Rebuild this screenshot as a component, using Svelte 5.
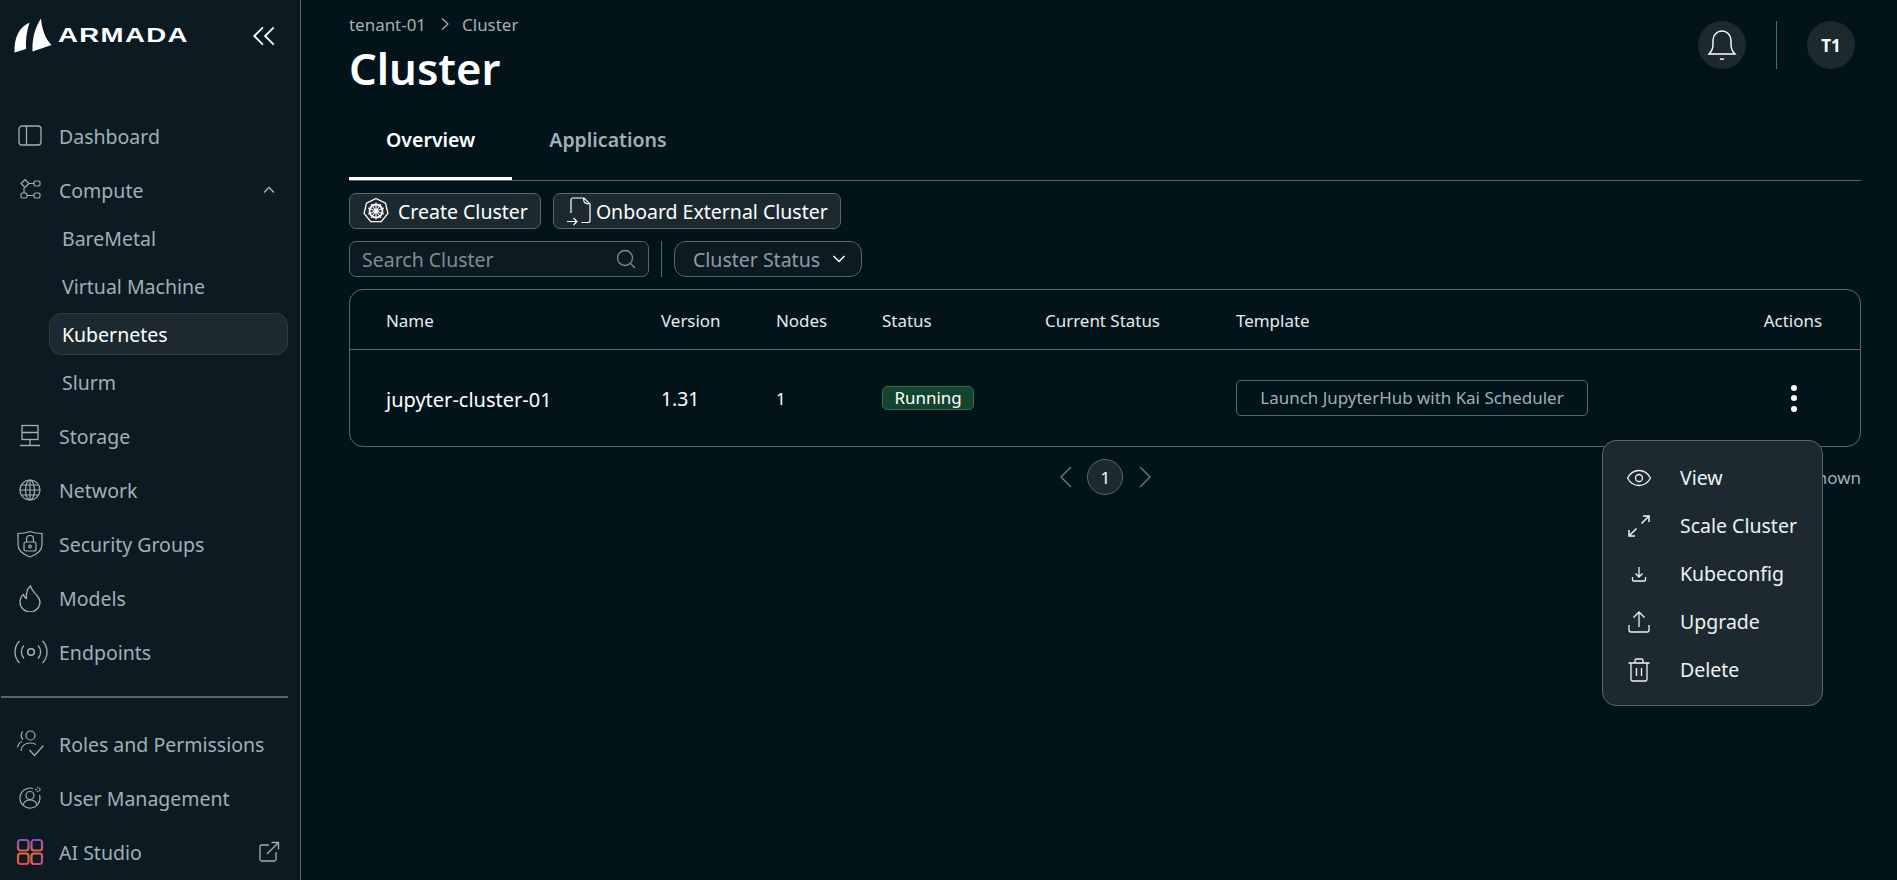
<script>
  const columns = ['Name', 'Version', 'Nodes', 'Status', 'Current Status', 'Template', 'Actions'];
  const children = ['BareMetal', 'Virtual Machine', 'Kubernetes', 'Slurm'];
</script>

<div class="page">
  <aside class="sidebar">
    <div class="brand">
      <div class="logo">
        <svg class="sail" viewBox="0 0 40 36" width="40" height="36">
          <path d="M0.5 34.5C0 18 6 9 15.500 4.500C12.500 14 11.500 23 12 31Z" fill="#fff" />
          <path d="M27 0.500C28 12 31.500 21 37.500 27L18.500 33.500C18 20 21 10 27 0.500Z" fill="#fff" />
        </svg>
        <span class="wordmark">ARMADA</span>
      </div>
      <svg class="collapse" viewBox="0 0 24 24" width="26" height="26" fill="none" stroke="#fff" stroke-width="1.700">
        <path d="M11 4L3 12l8 8M21 4l-8 8 8 8" />
      </svg>
    </div>

    <nav class="nav">
      <div class="item">
        <svg class="ic" viewBox="0 0 28 28" fill="none" stroke="currentColor" stroke-width="1.300">
          <rect x="3" y="4" width="22" height="19" rx="3" /><path d="M10.500 4v19" />
        </svg>
        Dashboard
      </div>
      <div class="item">
        <svg class="ic" viewBox="0 0 28 28" fill="none" stroke="currentColor" stroke-width="1.200">
          <path d="M9 3.500l4 4-4 4-4-4z" /><rect x="18" y="5" width="6" height="5" rx="1.500" /><rect x="5" y="17" width="6" height="5" rx="1.500" /><rect x="18" y="17" width="6" height="5" rx="1.500" />
          <path d="M13 7.500h5M11 19.500h7M8 11.500V17" />
        </svg>
        Compute
        <svg class="caret" viewBox="0 0 14 14" width="14" height="14" fill="none" stroke="currentColor" stroke-width="1.500"><path d="M2 9.500l5-5 5 5" /></svg>
      </div>
      <div class="sub">
        {#each children as child}
          <div class="sub-item" class:active={child === 'Kubernetes'}>{child}</div>
        {/each}
      </div>
      <div class="item">
        <svg class="ic" viewBox="0 0 28 28" fill="none" stroke="currentColor" stroke-width="1.300">
          <rect x="6" y="3.500" width="16" height="14" /><path d="M6 10.500h16M14 17.500v6M4 23.500h20" />
        </svg>
        Storage
      </div>
      <div class="item">
        <svg class="ic" viewBox="0 0 28 28" fill="none" stroke="currentColor" stroke-width="1.200">
          <circle cx="14" cy="14" r="10" /><ellipse cx="14" cy="14" rx="4.500" ry="10" /><path d="M4 14h20M5.300 9h17.400M5.300 19h17.400M14 4v20" />
        </svg>
        Network
      </div>
      <div class="item">
        <svg class="ic" viewBox="0 0 28 28" fill="none" stroke="currentColor" stroke-width="1.200">
          <path d="M14 1.500c4 1.500 8 2 12 2v11c0 6-5 10-12 12.500C7 24.500 2 20.500 2 14.500v-11c4 0 8-.5 12-2z" />
          <rect x="8" y="12" width="12" height="9" rx="2" /><path d="M10.500 12V9a3.500 3.500 0 017 0v3" /><circle cx="14" cy="16.500" r="1.300" />
        </svg>
        Security Groups
      </div>
      <div class="item">
        <svg class="ic" viewBox="0 0 28 28" fill="none" stroke="currentColor" stroke-width="1.300">
          <path d="M14.500 2c1 4 4 6.500 6.500 9.500 2 2.500 3 4.500 3 6.500a10 10 0 01-20 0c0-3 1.500-6 3.500-7.500.5 2 1.500 3.500 3 4C10 10 11 5 14.500 2z" />
        </svg>
        Models
      </div>
      <div class="item">
        <svg class="ic wide" viewBox="0 0 34 28" fill="none" stroke="currentColor" stroke-width="1.300">
          <circle cx="17" cy="14" r="3.300" stroke-width="1.600" />
          <path d="M10 7.500c-3.500 3.500-3.500 9.500 0 13M24 7.500c3.500 3.500 3.500 9.500 0 13M5.500 3c-6 6-6 16 0 22M28.500 3c6 6 6 16 0 22" />
        </svg>
        Endpoints
      </div>

      <div class="rule"></div>

      <div class="item">
        <svg class="ic" viewBox="0 0 28 28" fill="none" stroke="currentColor" stroke-width="1.200">
          <circle cx="14.500" cy="5.500" r="4.500" /><path d="M7 1.500c-2.500 1.500-2.500 6 0 8M1.500 17.500c.5-3 2-5 4.500-6M5 21c.5-5 4-8 9.500-8 2 0 4 .5 5.500 1.500M13.500 20l5 5.500 9-10" />
        </svg>
        Roles and Permissions
      </div>
      <div class="item">
        <svg class="ic" viewBox="0 0 28 28" fill="none" stroke="currentColor" stroke-width="1.200">
          <path d="M17 4.500A10 10 0 1023.500 11" /><circle cx="14" cy="11.500" r="4" /><path d="M7 21c1-3.500 3.500-5 7-5s6 1.500 7 5" />
          <circle cx="22" cy="5.500" r="2" stroke-dasharray="1.500 1" />
        </svg>
        User Management
      </div>
      <div class="item">
        <svg class="ic" viewBox="0 0 28 28" fill="none" stroke-width="2.200">
          <defs>
            <linearGradient id="studioTop" gradientUnits="userSpaceOnUse" x1="0" y1="1" x2="0" y2="14">
              <stop offset="0" stop-color="#8d4cc4" /><stop offset="1" stop-color="#e0604a" />
            </linearGradient>
            <linearGradient id="studioLeft" gradientUnits="userSpaceOnUse" x1="0" y1="15" x2="0" y2="27">
              <stop offset="0" stop-color="#f4683a" /><stop offset="1" stop-color="#ea3f4a" />
            </linearGradient>
            <linearGradient id="studioRight" gradientUnits="userSpaceOnUse" x1="15" y1="15" x2="27" y2="27">
              <stop offset="0" stop-color="#f4743a" /><stop offset="1" stop-color="#a944ae" />
            </linearGradient>
          </defs>
          <rect x="2" y="2" width="10.500" height="10.500" rx="2.500" stroke="url(#studioTop)" />
          <rect x="15.500" y="2" width="10.500" height="10.500" rx="2.500" stroke="url(#studioTop)" />
          <rect x="2" y="15.500" width="10.500" height="10.500" rx="2.500" stroke="url(#studioLeft)" />
          <rect x="15.500" y="15.500" width="10.500" height="10.500" rx="2.500" stroke="url(#studioRight)" />
        </svg>
        AI Studio
        <svg class="external" viewBox="0 0 22 22" width="22" height="22" fill="none" stroke="currentColor" stroke-width="1.300">
          <path d="M11 4H3.500A1.500 1.500 0 002 5.500v13A1.500 1.500 0 003.500 20h13a1.500 1.500 0 001.500-1.500V11M9 13L20.500 1.500M13.500 1.500h7v7" />
        </svg>
      </div>
    </nav>
  </aside>

  <main class="main">
    <header class="top">
      <div>
        <div class="crumbs">
          <span>tenant-01</span>
          <svg viewBox="0 0 10 14" width="10" height="14" fill="none" stroke="currentColor" stroke-width="1.200"><path d="M2 1.500L8 7l-6 5.500" /></svg>
          <span class="crumb-last">Cluster</span>
        </div>
        <h1>Cluster</h1>
      </div>
      <div class="top-actions">
        <div class="round">
          <svg viewBox="0 0 32 32" width="32" height="32" fill="none" stroke="#fff" stroke-width="1.400">
            <path d="M3 26c2-2 4-3.500 4-10V12a9 9 0 0118 0v4c0 6.500 2 8 4 10z" transform="translate(0 -1)" /><path d="M14 29.500c1 1 3 1 4 0" />
          </svg>
        </div>
        <div class="vline"></div>
        <div class="round initials">T1</div>
      </div>
    </header>

    <div class="tabs">
      <div class="tab selected">Overview</div>
      <div class="tab">Applications</div>
    </div>

    <div class="buttons">
      <button class="btn">
        <svg viewBox="0 0 28 28" width="28" height="28" fill="none" stroke="#fff" stroke-width="1.300">
          <path d="M14 1.500l9.500 4.600 2.400 10.300-6.600 8.300H8.700l-6.600-8.300 2.400-10.300z" />
          <circle cx="14" cy="14" r="6.500" stroke-width="1.800" /><path d="M14 5.500v17M6 11l16 6M22 11l-16 6M9 21l10-14M19 21L9 7" stroke-width="1.100" /><circle cx="14" cy="14" r="1.800" fill="#fff" />
        </svg>
        Create Cluster
      </button>
      <button class="btn onboard">
        <svg viewBox="0 0 26 30" width="26" height="30" fill="none" stroke="#fff" stroke-width="1.200">
          <path d="M5 17V4a2 2 0 012-2h11l6 6v16.500a2 2 0 01-2 2h-6.500M17.500 2c0 4 1 6 6.500 6" /><path d="M1 25.500h10M7.500 22l3.500 3.500-3.500 3.500" />
        </svg>
        Onboard External Cluster
      </button>
    </div>

    <div class="filters">
      <div class="search">
        <span>Search Cluster</span>
        <svg viewBox="0 0 22 22" width="22" height="22" fill="none" stroke="currentColor" stroke-width="1.300"><circle cx="10" cy="10" r="7.500" /><path d="M15.500 15.500L20 20" /></svg>
      </div>
      <div class="vline short"></div>
      <div class="select">
        Cluster Status
        <svg viewBox="0 0 16 16" width="16" height="16" fill="none" stroke="#fff" stroke-width="1.500"><path d="M2.500 5l5.500 5.500L13.500 5" /></svg>
      </div>
    </div>

    <div class="card">
      <table>
        <thead>
          <tr>
            {#each columns as col}
              <th>{col}</th>
            {/each}
          </tr>
        </thead>
        <tbody>
          <tr>
            <td class="name">jupyter-cluster-01</td>
            <td class="version">1.31</td>
            <td class="nodes">1</td>
            <td><span class="badge">Running</span></td>
            <td></td>
            <td><span class="template">Launch JupyterHub with Kai Scheduler</span></td>
            <td class="kebab"><span class="dots"><i></i><i></i><i></i></span></td>
          </tr>
        </tbody>
      </table>
    </div>

    <div class="pager">
      <div class="pages">
        <svg viewBox="0 0 14 24" width="14" height="24" fill="none" stroke="#6a7a80" stroke-width="1.400"><path d="M12 2L2 12l10 10" /></svg>
        <span class="page-num">1</span>
        <svg viewBox="0 0 14 24" width="14" height="24" fill="none" stroke="#6a7a80" stroke-width="1.400"><path d="M2 2l10 10L2 22" /></svg>
      </div>
      <span class="count">1 of 1 shown</span>
    </div>

    <div class="menu">
      <div class="menu-item">
        <svg viewBox="0 0 26 26" fill="none" stroke="currentColor" stroke-width="1.300">
          <path d="M1.500 13C4.500 7.500 8.500 5.500 13 5.500S21.500 7.500 24.500 13c-3 5.500-7 7.500-11.500 7.500S4.500 18.500 1.500 13z" /><circle cx="13" cy="13" r="3.500" />
        </svg>
        View
      </div>
      <div class="menu-item">
        <svg viewBox="0 0 26 26" fill="none" stroke="currentColor" stroke-width="1.500">
          <path d="M15.500 10.500L23 3M17 3h6v6M10.500 15.500L3 23M3 17v6h6" />
        </svg>
        Scale Cluster
      </div>
      <div class="menu-item">
        <svg viewBox="0 0 26 26" fill="none" stroke="currentColor" stroke-width="1.300">
          <path d="M13 6v10M9.500 12.500L13 16l3.500-3.500M6.500 16v3a1 1 0 001 1h11a1 1 0 001-1v-3" />
        </svg>
        Kubeconfig
      </div>
      <div class="menu-item">
        <svg viewBox="0 0 26 26" fill="none" stroke="currentColor" stroke-width="1.300">
          <path d="M13 18V3M7.500 8.500L13 3l5.500 5.500M3 16v5a2 2 0 002 2h16a2 2 0 002-2v-5" />
        </svg>
        Upgrade
      </div>
      <div class="menu-item">
        <svg viewBox="0 0 26 26" fill="none" stroke="currentColor" stroke-width="1.300">
          <path d="M2.500 6h21M9 6V3.500A1.500 1.500 0 0110.500 2h5A1.500 1.500 0 0117 3.500V6M5 6v16a2 2 0 002 2h12a2 2 0 002-2V6M10.500 11v8M15.500 11v8" />
        </svg>
        Delete
      </div>
    </div>
  </main>
</div>

<style>
  :global(body) {
    margin: 0;
    background: #02131a;
  }

  .page {
    display: flex;
    height: 880px;
    overflow: hidden;
    font-family: 'Noto Sans', sans-serif;
    color: #fff;
  }

  .sidebar {
    width: 300px;
    flex-shrink: 0;
    background: #0c1a21;
    border-right: 1px solid #56676d;
    color: #a2b0b6;
  }

  .brand {
    height: 112px;
    box-sizing: border-box;
    padding: 18px 23px 0 14px;
    display: flex;
    justify-content: space-between;
    align-items: flex-start;
  }

  .logo {
    display: flex;
    gap: 4px;
  }

  .wordmark {
    font-family: 'Liberation Sans', sans-serif;
    font-weight: 700;
    font-size: 20px;
    line-height: 20px;
    margin-top: 7px;
    color: #fff;
    letter-spacing: 1px;
    transform: scaleX(1.38);
    transform-origin: left center;
  }

  .collapse {
    margin-top: 5px;
  }

  .nav {
    display: flex;
    flex-direction: column;
    gap: 6px;
  }

  .item {
    height: 48px;
    display: flex;
    align-items: center;
    padding: 0 25px 0 16px;
    gap: 15px;
    font-size: 19.5px;
    position: relative;
  }

  .ic {
    width: 28px;
    height: 28px;
    flex-shrink: 0;
  }

  .ic.wide {
    width: 34px;
    margin-left: -2px;
    margin-right: -4px;
  }

  .caret {
    margin-left: auto;
    margin-right: -1px;
  }

  .external {
    margin-left: auto;
    margin-right: -5px;
  }

  .sub {
    display: flex;
    flex-direction: column;
    margin-top: -6px;
    margin-bottom: 0;
  }

  .sub-item {
    height: 42px;
    margin: 3px 12px 3px 49px;
    padding-left: 12px;
    display: flex;
    align-items: center;
    font-size: 19.5px;
    border: 1px solid transparent;
    border-radius: 12px;
    box-sizing: border-box;
  }

  .sub-item.active {
    background: #1c2a30;
    border-color: #2d3c42;
    color: #fff;
  }

  .rule {
    height: 2px;
    background: #56676d;
    margin: 14px 12px 16px 1px;
  }

  .main {
    flex: 1;
    min-width: 0;
    padding: 0 36px 0 48px;
    position: relative;
  }

  .top {
    height: 113px;
    display: flex;
    justify-content: space-between;
  }

  .crumbs {
    margin-top: 12px;
    height: 24px;
    display: flex;
    align-items: center;
    gap: 14px;
    font-size: 16.94px;
    color: #a6b1ae;
  }

  .crumb-last {
    margin-left: -2px;
  }

  h1 {
    margin: 6px 0 0;
    font-size: 43.56px;
    line-height: 52px;
    font-weight: 600;
  }

  .top-actions {
    display: flex;
    align-items: center;
    height: 48px;
    margin-top: 21px;
    margin-right: 6px;
  }

  .round {
    width: 48px;
    height: 48px;
    border-radius: 50%;
    background: #1c2a30;
    display: flex;
    align-items: center;
    justify-content: center;
  }

  .initials {
    font-weight: 700;
    font-size: 16.94px;
  }

  .vline {
    width: 1px;
    height: 48px;
    background: #56676d;
    margin: 0 30px;
  }

  .vline.short {
    height: 36px;
    margin: 0 12px;
  }

  .tabs {
    display: flex;
    height: 68px;
    box-sizing: border-box;
    border-bottom: 1px solid #56676d;
  }

  .tab {
    padding: 0 37px 12px;
    height: 67px;
    box-sizing: border-box;
    display: flex;
    align-items: center;
    font-size: 19.5px;
    font-weight: 600;
    color: #a2b0b6;
    border-bottom: 3px solid transparent;
  }

  .tab.selected {
    color: #fff;
    border-bottom-color: #fff;
  }

  .buttons {
    display: flex;
    gap: 12px;
    margin-top: 12px;
  }

  .btn {
    height: 36px;
    display: flex;
    align-items: center;
    gap: 8px;
    padding: 0 12px;
    border: 1px solid #56676d;
    border-radius: 7px;
    background: #1c2a30;
    color: #fff;
    font-family: inherit;
    font-size: 19.5px;
  }

  .btn.onboard {
    gap: 4px;
  }

  .filters {
    display: flex;
    align-items: center;
    margin-top: 12px;
  }

  .search {
    width: 300px;
    height: 36px;
    box-sizing: border-box;
    display: flex;
    align-items: center;
    justify-content: space-between;
    padding: 0 11px 0 12px;
    border: 1px solid #56676d;
    border-radius: 7px;
    background: #0c1a21;
    color: #7f8e94;
    font-size: 19.5px;
  }

  .select {
    width: 188px;
    height: 36px;
    box-sizing: border-box;
    display: flex;
    align-items: center;
    justify-content: space-between;
    white-space: nowrap;
    padding: 0 14px 0 18px;
    border: 1px solid #56676d;
    border-radius: 12px;
    background: #0c1a21;
    color: #8f9da3;
    font-size: 19.5px;
  }

  .card {
    margin-top: 12px;
    border: 1px solid #56676d;
    border-radius: 14px;
  }

  table {
    width: 100%;
    border-collapse: collapse;
    table-layout: fixed;
  }

  th {
    height: 58px;
    padding: 1px 0 0;
    text-align: left;
    font-size: 16.94px;
    font-weight: 400;
    color: #e6ecee;
    border-bottom: 1px solid #56676d;
  }

  td {
    height: 94px;
    padding: 0;
  }

  th:nth-child(1), td:nth-child(1) {
    width: 275px;
    padding-left: 36px;
  }

  th:nth-child(2), td:nth-child(2) {
    width: 115px;
  }

  th:nth-child(3), td:nth-child(3) {
    width: 106px;
  }

  th:nth-child(4), td:nth-child(4) {
    width: 163px;
  }

  th:nth-child(5), td:nth-child(5) {
    width: 191px;
  }

  th:last-child {
    text-align: right;
    padding-right: 38px;
  }

  .version {
    font-size: 19.36px;
  }

  td.name {
    font-size: 20px;
    padding-top: 2px;
  }

  .nodes {
    font-size: 16.94px;
  }

  .badge {
    display: inline-block;
    padding: 0 11.500px;
    height: 24px;
    line-height: 22px;
    box-sizing: border-box;
    font-size: 16.94px;
    background: #14432f;
    border: 1px solid #22734c;
    border-radius: 5px;
    color: #fff;
  }

  .template {
    display: inline-block;
    width: 352px;
    box-sizing: border-box;
    height: 36px;
    line-height: 34px;
    text-align: center;
    font-size: 16.94px;
    color: #a2b0b6;
    border: 1px solid #56676d;
    border-radius: 5px;
    white-space: nowrap;
  }

  td.kebab {
    text-align: right;
    padding-right: 63px;
  }

  .dots {
    display: inline-flex;
    flex-direction: column;
    gap: 4.500px;
    vertical-align: middle;
  }

  .dots i {
    width: 6px;
    height: 6px;
    border-radius: 50%;
    background: #fff;
  }

  .pager {
    position: relative;
    display: flex;
    justify-content: center;
    align-items: center;
    margin-top: 11px;
    height: 38px;
  }

  .pages {
    display: flex;
    align-items: center;
    gap: 12px;
    margin-left: 1px;
  }

  .page-num {
    width: 36px;
    height: 36px;
    margin: 0 2.500px 0 2px;
    box-sizing: border-box;
    border: 1px solid #56676d;
    border-radius: 50%;
    background: #1c2a30;
    display: flex;
    align-items: center;
    justify-content: center;
    font-size: 16.94px;
  }

  .count {
    position: absolute;
    right: 0;
    font-size: 16.94px;
    color: #a2b0b6;
  }

  .menu {
    position: absolute;
    left: 1301px;
    top: 440px;
    width: 221px;
    height: 266px;
    box-sizing: border-box;
    padding: 12.500px 0;
    border: 1px solid #56676d;
    border-radius: 14px;
    background: #1c2a30;
  }

  .menu-item {
    height: 48px;
    display: flex;
    align-items: center;
    gap: 28px;
    padding-left: 23px;
    font-size: 19.5px;
    color: #eef2f3;
  }

  .menu-item svg {
    width: 26px;
    height: 26px;
  }
</style>
